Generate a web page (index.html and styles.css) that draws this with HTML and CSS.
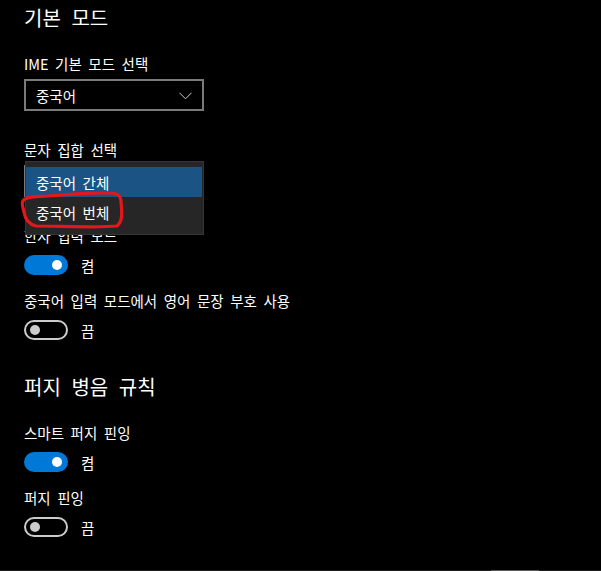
FILE: index.html
```html
<!DOCTYPE html>
<html lang="ko">
<head>
<meta charset="utf-8">
<title>IME 설정</title>
<link rel="stylesheet" href="styles.css">
</head>
<body>
<div class="page">
  <h2 class="heading first">기본 모드</h2>

  <div class="label">IME 기본 모드 선택</div>
  <div class="select">
    <span class="select-text">중국어</span>
    <svg class="chevron" width="13" height="8" viewBox="0 0 13 8"><polyline points="0.5,0.8 6.5,6.8 12.5,0.8" fill="none" stroke="#cfcfcf" stroke-width="1"/></svg>
  </div>

  <div class="label after-select">문자 집합 선택</div>
  <div class="select-wrap">
    <div class="select"></div>
    <div class="popup">
      <div class="item selected">중국어 간체</div>
      <div class="item">중국어 번체</div>
    </div>
    <svg class="scribble" width="112" height="44" viewBox="0 0 112 44">
      <path d="M5 11 C 8 6, 18 7, 30 6 C 48 5, 70 2, 92 3 C 100 3, 103 6, 103 12 C 104 22, 105 31, 99 36 C 80 38, 42 36, 18 36 C 10 34, 7 29, 6 22 C 5 17, 3 13, 5 11 Z" fill="none" stroke="#e5161c" stroke-width="3.2" stroke-linejoin="round"/>
    </svg>
  </div>

  <div class="label after-select">한자 입력 모드</div>
  <div class="toggle-row">
    <span class="toggle on"><span class="knob"></span></span>
    <span class="toggle-text">켬</span>
  </div>

  <div class="label after-toggle">중국어 입력 모드에서 영어 문장 부호 사용</div>
  <div class="toggle-row">
    <span class="toggle off"><span class="knob"></span></span>
    <span class="toggle-text">끔</span>
  </div>

  <h2 class="heading second">퍼지 병음 규칙</h2>

  <div class="label">스마트 퍼지 핀잉</div>
  <div class="toggle-row">
    <span class="toggle on"><span class="knob"></span></span>
    <span class="toggle-text">켬</span>
  </div>

  <div class="label after-toggle">퍼지 핀잉</div>
  <div class="toggle-row">
    <span class="toggle off"><span class="knob"></span></span>
    <span class="toggle-text">끔</span>
  </div>
</div>
<div class="bottom-bar"><span class="bottom-thumb"></span></div>
</body>
</html>
```

FILE: styles.css
```css
html, body {
  margin: 0;
  padding: 0;
  background: #000;
}
body {
  width: 601px;
  height: 571px;
  overflow: hidden;
  position: relative;
  color: #fff;
  font-family: "Noto Sans CJK KR", "Noto Sans", sans-serif;
}
.page {
  padding-left: 24px;
  padding-top: 4px;
}
.heading {
  margin: 0;
  font-size: 20px;
  line-height: 28px;
  font-weight: 400;
  letter-spacing: 0;
  word-spacing: 5px;
}
.heading.second {
  margin-top: 33px;
}
.label {
  font-size: 14.5px;
  line-height: 20px;
  letter-spacing: 0;
  word-spacing: 2.5px;
  margin-top: 22px;
}
.label.after-select {
  margin-top: 29px;
}
.label.after-toggle {
  margin-top: 16px;
}
.select {
  box-sizing: border-box;
  width: 180px;
  height: 32px;
  margin-top: 5px;
  border: 2px solid #7a7a7a;
  display: flex;
  align-items: center;
  justify-content: space-between;
  padding: 0 10px 0 10px;
  font-size: 14.5px;
}
.chevron {
  display: block;
  margin-top: 1px;
}
.select-wrap {
  position: relative;
}
.popup {
  position: absolute;
  left: 1px;
  top: -4px;
  box-sizing: border-box;
  width: 179px;
  height: 74px;
  background: #262626;
  border: 1px solid #353535;
  padding: 5px 1px 0 0;
}
.item {
  height: 30px;
  display: flex;
  align-items: center;
  padding-left: 10px;
  font-size: 14.5px;
  word-spacing: 2.5px;
}
.item.selected {
  background: #1b5385;
}
.scribble {
  position: absolute;
  left: -6px;
  top: 25px;
}
.toggle-row {
  display: flex;
  align-items: center;
  height: 20px;
  margin-top: 9px;
}
.toggle {
  box-sizing: border-box;
  width: 44px;
  height: 20px;
  border-radius: 10px;
  display: flex;
  align-items: center;
}
.toggle.on {
  background: #0078d7;
  justify-content: flex-end;
  padding-right: 6px;
}
.toggle.off {
  border: 2px solid #cccccc;
  padding-left: 4px;
}
.knob {
  width: 10px;
  height: 10px;
  border-radius: 50%;
}
.toggle.on .knob {
  background: #fff;
}
.toggle.off .knob {
  background: #cccccc;
}
.toggle-text {
  margin-left: 13px;
  font-size: 14.5px;
}
.bottom-bar {
  position: absolute;
  left: 0;
  bottom: 0;
  width: 601px;
  height: 1px;
  background: #1c1c1c;
}
.bottom-thumb {
  position: absolute;
  left: 491px;
  top: 0;
  width: 48px;
  height: 1px;
  background: #5a5a5a;
}
```
